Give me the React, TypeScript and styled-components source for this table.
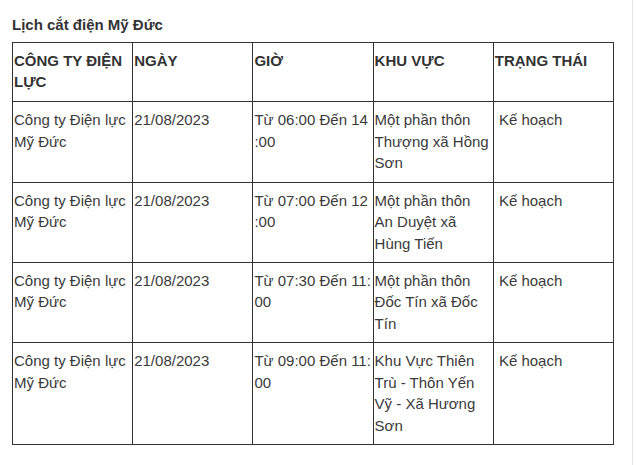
import React from "react";
import styled, { createGlobalStyle } from "styled-components";

const GlobalStyle = createGlobalStyle`
  html, body { margin: 0; padding: 0; background: #fff; }
  body { font-family: "Liberation Sans", Arial, sans-serif; color: #333; }
`;

const Page = styled.div`
  width: 633px;
  min-height: 465px;
  box-sizing: border-box;
  border-right: 1px solid #e6e6e6;
  padding: 14px 0 0 12px;
`;

const Title = styled.h3`
  margin: 0 0 6px 0;
  font-size: 15px;
  line-height: 21.6px;
  font-weight: bold;
  color: #333;
`;

const Table = styled.table`
  width: 602px;
  table-layout: fixed;
  border-collapse: collapse;
  font-size: 15px;
  line-height: 21.6px;
`;

const HeadCell = styled.th`
  border: 1px solid #333;
  padding: 7px 1px 8.5px;
  text-align: left;
  vertical-align: top;
  font-weight: bold;
  color: #333;
`;

const Cell = styled.td<{ $breakAll?: boolean }>`
  border: 1px solid #333;
  padding: 7px 1px 7.5px;
  vertical-align: top;
  color: #3a3a3a;
  word-break: ${(p) => (p.$breakAll ? "break-all" : "normal")};
`;

const headers = ["CÔNG TY ĐIỆN LỰC", "NGÀY", "GIỜ", "KHU VỰC", "TRẠNG THÁI"];

const rows = [
  {
    company: "Công ty Điện lực Mỹ Đức",
    date: "21/08/2023",
    time: "Từ 06:00 Đến 14 :00",
    area: "Một phần thôn Thượng xã Hồng Sơn",
    status: "\u00a0Kế hoạch",
  },
  {
    company: "Công ty Điện lực Mỹ Đức",
    date: "21/08/2023",
    time: "Từ 07:00 Đến 12 :00",
    area: "Một phần thôn An Duyệt xã Hùng Tiến",
    status: "\u00a0Kế hoạch",
  },
  {
    company: "Công ty Điện lực Mỹ Đức",
    date: "21/08/2023",
    time: "Từ 07:30 Đến 11:00",
    area: "Một phần thôn Đốc Tín xã Đốc Tín",
    status: "\u00a0Kế hoạch",
  },
  {
    company: "Công ty Điện lực Mỹ Đức",
    date: "21/08/2023",
    time: "Từ 09:00 Đến 11:00",
    area: "Khu Vực Thiên Trù - Thôn Yến Vỹ - Xã Hương Sơn",
    status: "\u00a0Kế hoạch",
  },
];

export default function App() {
  return (
    <>
      <GlobalStyle />
      <Page>
        <Title>Lịch cắt điện Mỹ Đức</Title>
        <Table>
          <thead>
            <tr>
              {headers.map((h) => (
                <HeadCell key={h}>{h}</HeadCell>
              ))}
            </tr>
          </thead>
          <tbody>
            {rows.map((r, i) => (
              <tr key={i}>
                <Cell>{r.company}</Cell>
                <Cell>{r.date}</Cell>
                <Cell $breakAll>{r.time}</Cell>
                <Cell>{r.area}</Cell>
                <Cell>{r.status}</Cell>
              </tr>
            ))}
          </tbody>
        </Table>
      </Page>
    </>
  );
}
